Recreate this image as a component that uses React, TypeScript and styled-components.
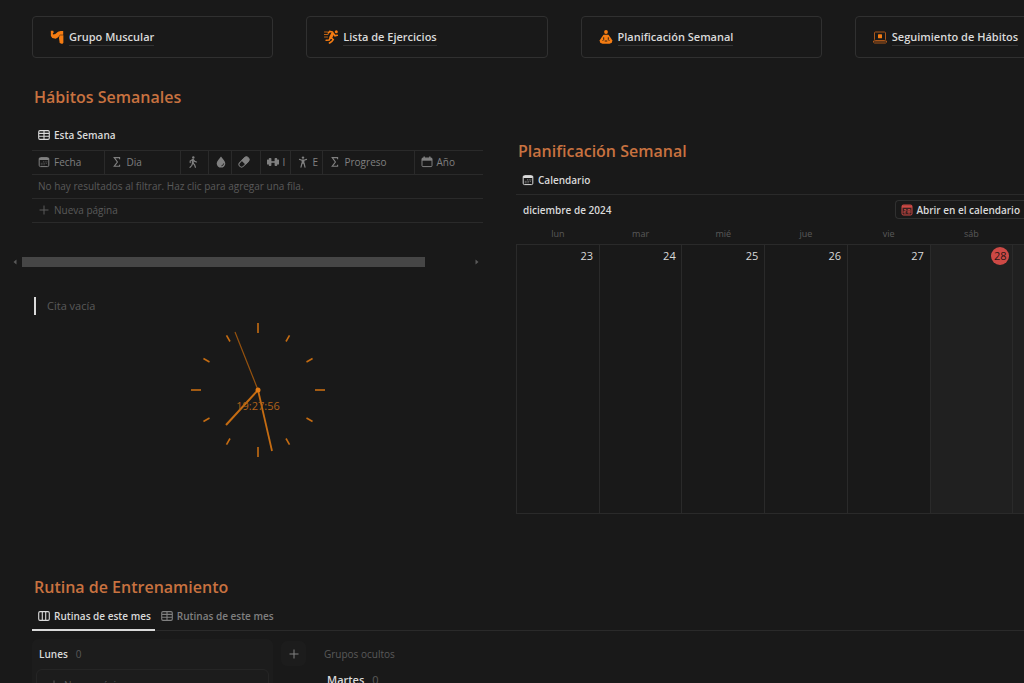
import React from 'react';
import styled, { createGlobalStyle, css } from 'styled-components';

const color = {
  bg: '#191919',
  line: '#2a2a2a',
  text: '#dadada',
  muted: '#808080',
  faint: '#5a5a5a',
  accent: '#c87240',
  orange: '#f57c12',
  red: '#cd4945',
};

const GlobalStyle = createGlobalStyle`
  * { box-sizing: border-box; }
  body {
    margin: 0;
    background: ${color.bg};
    color: ${color.text};
    font-family: 'Open Sans', 'Noto Sans', sans-serif;
    font-size: 10px;
    line-height: 16px;
  }
  button { font: inherit; color: inherit; background: none; border: 0; padding: 0; cursor: pointer; }
  a { color: inherit; text-decoration: none; }
  svg { display: block; flex: none; }
`;

const Page = styled.div`
  height: 100vh;
  overflow: hidden;
`;

const Content = styled.main`
  margin: 0 -72px 0 32px;
  padding-top: 16px;
`;

const CardNav = styled.nav`
  display: grid;
  grid-template-columns: repeat(4, 1fr);
  gap: 33px;
`;

const NavCard = styled.div`
  display: flex;
  align-items: center;
  height: 42px;
  padding: 0 17px;
  border: 1px solid #303030;
  border-radius: 4px;
`;

const NavLink = styled.a`
  display: flex;
  align-items: center;
  gap: 5px;
  font-size: 11px;
  font-weight: 600;
  white-space: nowrap;
`;

const NavLabel = styled.span`
  border-bottom: 1px solid #333;
`;

const Columns = styled.div`
  display: grid;
  grid-template-columns: 451fr 580fr;
  gap: 33px;
  height: 517px;
`;

const LeftColumn = styled.section`
  min-width: 0;
  padding-top: 27px;
`;

const RightColumn = styled.section`
  min-width: 0;
  padding-top: 81px;
`;

const Heading = styled.h2`
  margin: 0;
  padding-left: 2px;
  color: ${color.accent};
  font-size: 16px;
  font-weight: 600;
  line-height: 24px;
`;

const TabBar = styled.div<{ $line?: boolean; $spaced?: boolean }>`
  display: flex;
  height: 32px;
  margin-top: ${(p) => (p.$spaced ? 9 : 0)}px;
  border-bottom: 1px solid ${(p) => (p.$line ? color.line : 'transparent')};
`;

const Tab = styled.button<{ $active?: boolean; $underline?: boolean }>`
  display: flex;
  align-items: center;
  gap: 4px;
  height: 32px;
  padding: 2px 4px 0 6px;
  font-weight: 600;
  white-space: nowrap;
  color: ${(p) => (p.$active ? color.text : color.muted)};
  ${(p) =>
    p.$underline &&
    css`
      box-shadow: inset 0 -2px ${color.text};
    `}
`;

const HabitTable = styled.table`
  width: 100%;
  table-layout: fixed;
  border-collapse: collapse;
  color: ${color.muted};
`;

const HeadCell = styled.th`
  height: 24px;
  padding: 0 0 1px 6px;
  border: 1px solid ${color.line};
  border-width: 1px 1px 1px 0;
  font-weight: 400;
  overflow: hidden;
  &:last-child { border-right: 0; }
`;

const HeadLabel = styled.span`
  display: flex;
  align-items: center;
  gap: 4px;
  overflow: hidden;
  white-space: nowrap;
`;

const BodyCell = styled.td`
  height: 24px;
  padding: 0 6px 1px;
  border-bottom: 1px solid ${color.line};
  color: ${color.faint};
`;

const AddButton = styled.button`
  display: flex;
  align-items: center;
  gap: 4px;
`;

const ScrollBar = styled.div`
  display: flex;
  align-items: center;
  gap: 5px;
  height: 10px;
  margin: 34px 4px 0 -19px;
  color: #5a5a5a;
`;

const Track = styled.div`
  flex: 1;
`;

const Thumb = styled.div`
  width: 90%;
  height: 10px;
  background: #464646;
`;

const Quote = styled.blockquote`
  margin: 30px 2px 0;
  padding-left: 11px;
  border-left: 2px solid ${color.text};
  color: ${color.faint};
  font-size: 11px;
  line-height: 18px;
`;

const ClockFrame = styled.div`
  display: flex;
  justify-content: center;
  margin-top: 8px;
`;

const ClockTime = styled.text`
  fill: #b0611a;
  font-size: 11px;
  text-anchor: middle;
`;

const CalendarBar = styled.div`
  display: flex;
  align-items: center;
  justify-content: space-between;
  height: 29px;
  padding: 0 72px 0 7px;
`;

const Month = styled.span`
  font-weight: 600;
`;

const OpenButton = styled.button`
  display: flex;
  align-items: center;
  gap: 3px;
  height: 19px;
  padding: 0 4px 0 5px;
  border: 1px solid #303030;
  border-right: 0;
  border-radius: 4px 0 0 4px;
  font-weight: 600;
  white-space: nowrap;
`;

const Calendar = styled.table`
  width: 100%;
  table-layout: fixed;
  border-collapse: collapse;
`;

const Weekday = styled.th`
  height: 20px;
  padding: 0;
  color: ${color.faint};
  font-size: 9px;
  font-weight: 400;
`;

const Day = styled.td<{ $weekend?: boolean }>`
  height: 269px;
  padding: 2px 3px;
  border: 1px solid ${color.line};
  background: ${(p) => (p.$weekend ? '#202020' : 'transparent')};
  font-size: 11px;
  text-align: right;
  vertical-align: top;
`;

const DayNumber = styled.span<{ $today?: boolean }>`
  display: inline-block;
  min-width: 18px;
  border-radius: 9px;
  line-height: 18px;
  text-align: center;
  ${(p) =>
    p.$today &&
    css`
      background: ${color.red};
      color: #2a1716;
    `}
`;

const Board = styled.div`
  display: grid;
  grid-template-columns: 241px 25px 1fr;
  column-gap: 8px;
  padding-top: 8px;
`;

const BoardColumn = styled.div`
  padding: 0 4px;
  border-radius: 6px;
  background: #1c1c1c;
`;

const GroupTitle = styled.div`
  display: flex;
  align-items: center;
  gap: 8px;
  height: 30px;
  padding-left: 3px;
  font-weight: 600;
`;

const Count = styled.span`
  color: ${color.faint};
  font-weight: 400;
`;

const NewCard = styled.button`
  display: flex;
  align-items: center;
  gap: 4px;
  width: 100%;
  height: 32px;
  padding-left: 11px;
  border: 1px solid #252525;
  border-radius: 6px;
  color: ${color.faint};
`;

const AddGroup = styled.button`
  display: grid;
  place-items: center;
  width: 25px;
  height: 25px;
  margin-top: 2px;
  border-radius: 6px;
  background: #1c1c1c;
  color: ${color.muted};
`;

const HiddenGroups = styled.div`
  padding-left: 10px;
  color: ${color.faint};
`;

const HiddenTitle = styled.div`
  line-height: 30px;
`;

const HiddenItem = styled.div`
  display: flex;
  gap: 8px;
  padding-left: 3px;
  line-height: 22px;
  color: ${color.text};
  font-weight: 600;
  font-size: 11px;
`;

const TableIcon = () => (
  <svg width="12" height="12" viewBox="0 0 12 12" fill="none" stroke="currentColor" strokeWidth="1.1">
    <rect x="0.7" y="1.6" width="10.6" height="8.8" rx="1.3" />
    <path d="M1 4.4h10M1 7.3h10M6 2v8.4" />
  </svg>
);

const BoardIcon = () => (
  <svg width="12" height="12" viewBox="0 0 12 12" fill="none" stroke="currentColor" strokeWidth="1.1">
    <rect x="0.7" y="1.6" width="10.6" height="8.8" rx="1.3" />
    <path d="M4.3 2v8.4M7.7 2v8.4" />
  </svg>
);

const DateIcon = () => (
  <svg width="12" height="12" viewBox="0 0 12 12" fill="none" stroke="currentColor">
    <rect x="1.2" y="1.6" width="9.6" height="9" rx="1.3" />
    <path d="M1.2 3h9.6" strokeWidth="2" />
    <path d="M5 5.8h4.5M2.8 7.3h6.7M2.8 8.8h4" strokeWidth="0.8" strokeDasharray="1 0.7" opacity="0.7" />
  </svg>
);

const SolidCalendarIcon = () => (
  <svg width="12" height="12" viewBox="0 0 12 12" fill="none" stroke="currentColor">
    <rect x="1" y="2" width="10" height="8.6" rx="1" />
    <path d="M1 3.4h10" strokeWidth="2.6" />
    <path d="M3.2 0.5v2M8.8 0.5v2" strokeWidth="1.4" />
  </svg>
);

const RedCalendarIcon = () => (
  <svg width="12" height="12" viewBox="0 0 12 12" fill="none" stroke={color.red}>
    <rect x="1" y="1" width="10" height="10" rx="1.4" fill="#3a2120" />
    <path d="M1 2.5h10" strokeWidth="2.4" />
    <path d="M3 5.5h2v1.7H3v1.8h2M7 5.5h2v3.5H7zM7 7.2h2" strokeWidth="0.8" />
  </svg>
);

const SigmaIcon = () => (
  <svg width="12" height="12" viewBox="0 0 12 12" fill="none" stroke="currentColor" strokeWidth="1.1">
    <path d="M8.6 3.2V1.6H3.2L6.4 6l-3.2 4.3h5.4V8.8" />
  </svg>
);

const WalkIcon = () => (
  <svg width="12" height="12" viewBox="0 0 12 12" fill="none" stroke="currentColor" strokeWidth="1.2" strokeLinecap="round">
    <circle cx="6.3" cy="1.5" r="1.2" fill="currentColor" stroke="none" />
    <path d="M5.8 4v3.2" strokeWidth="2" />
    <path d="M5.3 3.8 3.2 5v1.6M6.5 3.8l1.2 1.6 1.8.6M5.5 7.4 4.9 9.3 3 11.3M6.3 7.4l1.3 1.5.8 2.4" />
  </svg>
);

const DropIcon = () => (
  <svg width="12" height="12" viewBox="0 0 12 12">
    <path d="M6 .5C7.6 2.7 10.3 5 10.3 7.6a4.3 4 0 0 1-8.6 0C1.7 5 4.4 2.7 6 .5z" fill="currentColor" />
    <path d="M6.4 9.8a2.5 2.5 0 0 0 2.3-2.4" fill="none" stroke={color.bg} strokeWidth="0.8" />
  </svg>
);

const PillIcon = () => (
  <svg width="12" height="12" viewBox="0 0 12 12">
    <g transform="rotate(-45 6 6)">
      <rect x="0" y="3.4" width="12" height="5.2" rx="2.6" fill="none" stroke="currentColor" />
      <path d="M5.2 3h3.900a3 3 0 0 1 0 6H5.200z" fill="currentColor" />
    </g>
  </svg>
);

const DumbbellIcon = () => (
  <svg width="12" height="12" viewBox="0 0 12 12" fill="currentColor">
    <rect x="1.8" y="2" width="2.6" height="8" rx="0.8" />
    <rect x="7.6" y="2" width="2.6" height="8" rx="0.8" />
    <rect x="0" y="3.5" width="2" height="5" rx="0.6" />
    <rect x="10" y="3.5" width="2" height="5" rx="0.6" />
    <rect x="4" y="5.2" width="4" height="1.6" />
  </svg>
);

const PersonIcon = () => (
  <svg width="12" height="12" viewBox="0 0 12 12" fill="none" stroke="currentColor" strokeWidth="1.2" strokeLinecap="round">
    <circle cx="6" cy="1.6" r="1.2" fill="currentColor" stroke="none" />
    <path d="M2.5 3.4 5 4.2h2l2.5-.8M4.9 7.5 4 11.2M7.1 7.5 8 11.2" />
    <path d="M6 4v3.800" strokeWidth="2.800" strokeLinecap="butt" />
  </svg>
);

const PlusIcon = () => (
  <svg width="12" height="12" viewBox="0 0 12 12" fill="none" stroke="currentColor">
    <path d="M6 1.5v9M1.5 6h9" />
  </svg>
);

const ArmIcon = () => (
  <svg width="14" height="14" viewBox="0 0 14 14" fill={color.orange}>
    <path d="M.8.8h2.400l.6 1.600-1 .9.300 1.100 2.200-.3 2.700-2.400L10.500.9h2.700v3.900H9.900L8.200 7.200 5.700 8.700 2.300 7.900.9 6z" />
    <path d="M9.500 5.300h3.900v7.500l-1.200 1.200-2.500-.9-.7-5z" />
  </svg>
);

const RunIcon = () => (
  <svg width="14" height="14" viewBox="0 0 14 14" fill="none" stroke={color.orange} strokeLinecap="round">
    <circle cx="12.300" cy="1.800" r="1.500" fill={color.orange} stroke="none" />
    <path d="m8.700 3.500-2 4" strokeWidth="3" />
    <path d="M8.500 2 5.700 1.400 4.300 3M10 4.300l1 1.500 2.300-.5M7.500 8l1.700 1.500-1.400 1.900L5.500 13M6 8.300 5.200 10l-3 .3" strokeWidth="1.600" />
    <path d="M.5 2h3M0 4.500h4M.5 7h3" opacity=".75" />
  </svg>
);

const MeditateIcon = () => (
  <svg width="14" height="14" viewBox="0 0 14 14" fill={color.orange}>
    <circle cx="7" cy="2" r="1.900" />
    <path d="M4.500 4.800h5l2.300 3.200 1.600 2.400-.6 2.300-2.300 1.100h-7l-2.300-1.100L.6 10.400 2.200 8z" />
    <path d="M4.700 7.300v2.200l-1 1.300M9.300 7.300v2.200l1 1.300M5.700 11h2.600" fill="none" stroke={color.bg} strokeWidth="0.900" />
  </svg>
);

const LaptopIcon = () => (
  <svg width="14" height="14" viewBox="0 0 14 14" fill="none" stroke="#a9561b">
    <rect x="1.500" y="2" width="11" height="8.500" rx="1" />
    <path d="M.5 11v1.300l1 .7h11l1-.7V11M.5 11h13" />
    <rect x="5" y="4.200" width="4" height="4" rx=".5" fill={color.orange} stroke="none" />
  </svg>
);

const ArrowIcon = ({ flip }: { flip?: boolean }) => (
  <svg width="4" height="6" viewBox="0 0 4 6" fill="currentColor">
    <path d={flip ? 'M.5 .5 3.500 3 .5 5.500z' : 'M3.500 .5 .5 3l3 2.500z'} />
  </svg>
);

const HOURS = Array.from({ length: 12 }, (_, i) => i);

const Clock = () => (
  <svg width="134" height="134" viewBox="-67 -67 134 134" role="img" aria-label="19:27:56">
    <g stroke="#c56c12" strokeWidth="1.600">
      {HOURS.map((h) => (
        <line key={h} y1={h % 3 ? -63 : -67} y2={h % 3 ? -56 : -57} transform={`rotate(${h * 30})`} />
      ))}
    </g>
    <line x2="-23" y2="-58" stroke="#95520f" strokeWidth="1.200" />
    <line x2="-32" y2="35" stroke="#c56c12" strokeWidth="2" />
    <line x2="14" y2="61" stroke="#c56c12" strokeWidth="1.800" />
    <circle r="2.500" fill="#e27b14" />
    <ClockTime y="20">19:27:56</ClockTime>
  </svg>
);

const links = [
  { label: 'Grupo Muscular', icon: <ArmIcon /> },
  { label: 'Lista de Ejercicios', icon: <RunIcon /> },
  { label: 'Planificación Semanal', icon: <MeditateIcon /> },
  { label: 'Seguimiento de Hábitos', icon: <LaptopIcon /> },
];

const fields = [
  { label: 'Fecha', icon: <DateIcon />, width: 72 },
  { label: 'Dia', icon: <SigmaIcon />, width: 76 },
  { label: '', icon: <WalkIcon />, width: 28 },
  { label: '', icon: <DropIcon />, width: 23 },
  { label: '', icon: <PillIcon />, width: 29 },
  { label: 'I', icon: <DumbbellIcon />, width: 30 },
  { label: 'E', icon: <PersonIcon />, width: 32 },
  { label: 'Progreso', icon: <SigmaIcon />, width: 92 },
  { label: 'Año', icon: <SolidCalendarIcon />, width: 69 },
];

const days = [
  { name: 'lun', date: 23 },
  { name: 'mar', date: 24 },
  { name: 'mié', date: 25 },
  { name: 'jue', date: 26 },
  { name: 'vie', date: 27 },
  { name: 'sáb', date: 28, weekend: true, today: true },
  { name: '', date: null, weekend: true },
];

const FieldColumn = styled.col<{ $width: number }>`
  width: ${(p) => p.$width}px;
`;

export default function App() {
  return (
    <Page>
      <GlobalStyle />
      <Content>
        <CardNav>
          {links.map((l) => (
            <NavCard key={l.label}>
              <NavLink href="#">
                {l.icon}
                <NavLabel>{l.label}</NavLabel>
              </NavLink>
            </NavCard>
          ))}
        </CardNav>

        <Columns>
          <LeftColumn>
            <Heading>Hábitos Semanales</Heading>
            <TabBar $spaced>
              <Tab $active>
                <TableIcon />
                Esta Semana
              </Tab>
            </TabBar>
            <HabitTable>
              <colgroup>
                {fields.map((f, i) => (
                  <FieldColumn key={i} $width={f.width} />
                ))}
              </colgroup>
              <thead>
                <tr>
                  {fields.map((f, i) => (
                    <HeadCell key={i}>
                      <HeadLabel>
                        {f.icon}
                        {f.label}
                      </HeadLabel>
                    </HeadCell>
                  ))}
                </tr>
              </thead>
              <tbody>
                <tr>
                  <BodyCell colSpan={9}>No hay resultados al filtrar. Haz clic para agregar una fila.</BodyCell>
                </tr>
                <tr>
                  <BodyCell colSpan={9}>
                    <AddButton>
                      <PlusIcon />
                      Nueva página
                    </AddButton>
                  </BodyCell>
                </tr>
              </tbody>
            </HabitTable>
            <ScrollBar>
              <ArrowIcon />
              <Track>
                <Thumb />
              </Track>
              <ArrowIcon flip />
            </ScrollBar>
            <Quote>Cita vacía</Quote>
            <ClockFrame>
              <Clock />
            </ClockFrame>
          </LeftColumn>

          <RightColumn>
            <Heading>Planificación Semanal</Heading>
            <TabBar $line>
              <Tab $active>
                <DateIcon />
                Calendario
              </Tab>
            </TabBar>
            <CalendarBar>
              <Month>diciembre de 2024</Month>
              <OpenButton>
                <RedCalendarIcon />
                Abrir en el calendario
              </OpenButton>
            </CalendarBar>
            <Calendar>
              <thead>
                <tr>
                  {days.map((d, i) => (
                    <Weekday key={i}>{d.name}</Weekday>
                  ))}
                </tr>
              </thead>
              <tbody>
                <tr>
                  {days.map((d, i) => (
                    <Day key={i} $weekend={d.weekend}>
                      {d.date && <DayNumber $today={d.today}>{d.date}</DayNumber>}
                    </Day>
                  ))}
                </tr>
              </tbody>
            </Calendar>
          </RightColumn>
        </Columns>

        <section>
          <Heading>Rutina de Entrenamiento</Heading>
          <TabBar $line>
            <Tab $active $underline>
              <BoardIcon />
              Rutinas de este mes
            </Tab>
            <Tab>
              <TableIcon />
              Rutinas de este mes
            </Tab>
          </TabBar>
          <Board>
            <BoardColumn>
              <GroupTitle>
                Lunes <Count>0</Count>
              </GroupTitle>
              <NewCard>
                <PlusIcon />
                Nueva página
              </NewCard>
            </BoardColumn>
            <AddGroup aria-label="Añadir grupo">
              <PlusIcon />
            </AddGroup>
            <HiddenGroups>
              <HiddenTitle>Grupos ocultos</HiddenTitle>
              <HiddenItem>
                Martes <Count>0</Count>
              </HiddenItem>
            </HiddenGroups>
          </Board>
        </section>
      </Content>
    </Page>
  );
}
